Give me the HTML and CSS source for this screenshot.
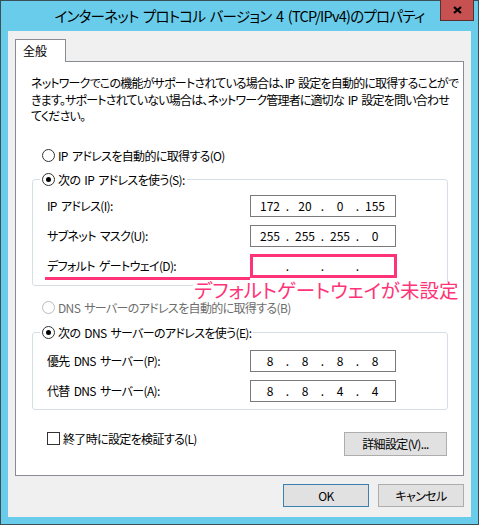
FILE: index.html
```html
<!DOCTYPE html>
<html lang="ja">
<head>
<meta charset="utf-8">
<title>IPv4 Properties</title>
<link rel="stylesheet" href="styles.css">
</head>
<body>
<div class="window">
  <div class="titlebar">
    <div class="title">インターネット プロトコル バージョン 4 (TCP/IPv4)のプロパティ</div>
    <div class="close"><svg width="9" height="8" viewBox="0 0 9 8"><path d="M1 1L8 7M8 1L1 7" stroke="#000" stroke-width="2.2" fill="none"/></svg></div>
  </div>
  <div class="client">
    <div class="tabs"><div class="tab">全般</div></div>
    <div class="panel">
      <p class="desc">ネットワークでこの機能がサポートされている場合は、IP 設定を自動的に取得することがで<br>きます。サポートされていない場合は、ネットワーク管理者に適切な IP 設定を問い合わせ<br>てください。</p>
      <div class="radio-row first"><span class="radio"></span><span>IP アドレスを自動的に取得する(O)</span></div>
      <fieldset class="group g1">
        <legend><span class="radio checked"></span><span>次の IP アドレスを使う(S):</span></legend>
        <div class="rows">
          <div class="field-row"><span>IP アドレス(I):</span>
            <div class="ipbox"><span>172</span><i>.</i><span>20</span><i>.</i><span>0</span><i>.</i><span>155</span></div></div>
          <div class="field-row"><span>サブネット マスク(U):</span>
            <div class="ipbox"><span>255</span><i>.</i><span>255</span><i>.</i><span>255</span><i>.</i><span>0</span></div></div>
          <div class="field-row gateway"><span>デフォルト ゲートウェイ(D):</span>
            <div class="ipbox"><span></span><i>.</i><span></span><i>.</i><span></span><i>.</i><span></span><b class="mark-box"></b></div>
            <b class="mark-line"></b>
            <b class="mark-text">デフォルトゲートウェイが未設定</b>
          </div>
        </div>
      </fieldset>
      <div class="radio-row disabled"><span class="radio"></span><span>DNS サーバーのアドレスを自動的に取得する(B)</span></div>
      <fieldset class="group g2">
        <legend><span class="radio checked"></span><span>次の DNS サーバーのアドレスを使う(E):</span></legend>
        <div class="rows">
          <div class="field-row"><span>優先 DNS サーバー(P):</span>
            <div class="ipbox"><span>8</span><i>.</i><span>8</span><i>.</i><span>8</span><i>.</i><span>8</span></div></div>
          <div class="field-row"><span>代替 DNS サーバー(A):</span>
            <div class="ipbox"><span>8</span><i>.</i><span>8</span><i>.</i><span>4</span><i>.</i><span>4</span></div></div>
        </div>
      </fieldset>
      <div class="bottom-row">
        <div class="check-row"><span class="checkbox"></span><span>終了時に設定を検証する(L)</span></div>
        <div class="btn details">詳細設定(V)...</div>
      </div>
    </div>
    <div class="footer">
      <div class="btn default">OK</div>
      <div class="btn">キャンセル</div>
    </div>
  </div>
</div>
</body>
</html>
```
FILE: styles.css
```css
html, body {
  margin: 0;
  padding: 0;
  background: #fff;
}
body {
  font-family: "Noto Sans CJK JP", sans-serif;
  font-size: 12px;
  font-feature-settings: "palt";
  letter-spacing: -0.65px;
  word-spacing: 2px;
  color: #000;
}
.window {
  width: 479px;
  height: 525px;
  box-sizing: border-box;
  border: 1px solid #3b4f57;
  background: #68ccea;
  display: flex;
  flex-direction: column;
}
.titlebar {
  height: 30px;
  flex: none;
  display: grid;
  grid-template-columns: 1fr auto 1fr;
  align-items: center;
}
.title {
  grid-column: 2;
  font-size: 14.5px;
  letter-spacing: -0.75px;
  word-spacing: 2px;
  line-height: 18px;
  white-space: nowrap;
}
.close {
  grid-column: 3;
  justify-self: end;
  align-self: start;
  margin-top: -1px;
  margin-right: 4px;
  width: 34px;
  height: 21px;
  box-sizing: border-box;
  background: #c75050;
  border: 1px solid #5b2f2f;
  border-top: none;
  display: flex;
  align-items: center;
  justify-content: center;
}
.client {
  flex: 1;
  margin: 0 7px 7px;
  background: #f0f0f0;
  padding: 8px 7px 10px;
  display: flex;
  flex-direction: column;
}
.tabs {
  height: 22px;
  display: flex;
  flex: none;
}
.tab {
  position: relative;
  z-index: 1;
  box-sizing: border-box;
  width: 51px;
  height: 23px;
  border: 1px solid #898c95;
  border-bottom: none;
  background: #fff;
  padding-left: 7px;
  line-height: 21px;
  letter-spacing: 0;
}
.panel {
  flex: 1;
  border: 1px solid #898c95;
  background: #fff;
  padding: 0 15px 17px;
  display: flex;
  flex-direction: column;
}
.desc {
  margin: 0;
  padding-top: 13px;
  line-height: 16.5px;
  letter-spacing: -0.8px;
  white-space: nowrap;
}
.radio-row {
  display: flex;
  align-items: center;
  gap: 3px;
  height: 16px;
  padding-left: 11px;
}
.radio-row.first { margin-top: 23px; }
.radio-row.disabled { margin-top: 14px; color: #6d6d6d; }
.radio {
  position: relative;
  width: 13px;
  height: 13px;
  box-sizing: border-box;
  border: 1px solid #333;
  border-radius: 50%;
  background: #fff;
  flex: none;
}
.disabled .radio { border-color: #bcbcbc; }
.radio.checked::after {
  content: "";
  position: absolute;
  left: 3px;
  top: 3px;
  width: 5px;
  height: 5px;
  border-radius: 50%;
  background: #000;
}
.group {
  margin: 8px 0 0 1px;
  border: 1px solid #d5dfe5;
  border-radius: 3px;
  padding: 7px 51px 8px 14px;
  min-width: 0;
}
.g2 { margin-top: 9px; padding-top: 9px; padding-bottom: 7px; }
.group legend {
  display: flex;
  align-items: center;
  gap: 3px;
  height: 16px;
  padding: 0 2px;
  margin-left: -7px;
}
.rows {
  display: flex;
  flex-direction: column;
  gap: 8px;
}
.field-row {
  display: grid;
  grid-template-columns: 1fr 146px;
  align-items: center;
  height: 22px;
}
.ipbox {
  position: relative;
  box-sizing: border-box;
  height: 22px;
  border: 1px solid #7a7a7a;
  padding-left: 4px;
  display: grid;
  grid-template-columns: 30px 5px 30px 5px 30px 5px 30px;
  align-items: center;
  text-align: center;
  line-height: 20px;
  letter-spacing: 0;
}
.ipbox i { font-style: normal; }
.gateway { position: relative; }
.mark-box {
  position: absolute;
  left: -1px;
  top: -2px;
  right: -2px;
  bottom: -2px;
  border: 3px solid #ff3377;
}
.mark-line {
  position: absolute;
  left: -2px;
  width: 205px;
  top: 22px;
  height: 3px;
  background: #ff3377;
}
.mark-text {
  position: absolute;
  left: 146px;
  top: 27px;
  font-weight: normal;
  font-size: 19.5px;
  line-height: 16px;
  letter-spacing: 0;
  color: #ff3377;
  background: #fff;
  white-space: nowrap;
  padding: 0 1px;
}
.bottom-row {
  display: flex;
  justify-content: space-between;
  align-items: flex-start;
  margin-top: 22px;
  padding: 0 1px 0 16px;
}
.check-row {
  display: flex;
  align-items: center;
  gap: 3px;
  height: 13px;
}
.checkbox {
  width: 13px;
  height: 13px;
  box-sizing: border-box;
  border: 1px solid #333;
  background: #fff;
}
.btn {
  box-sizing: border-box;
  width: 86px;
  height: 23px;
  border: 1px solid #adadad;
  background: #e1e1e1;
  display: flex;
  align-items: center;
  justify-content: center;
}
.btn.details {
  width: 103px;
  height: 24px;
}
.btn.default { border-color: #3c7fb1; }
.footer {
  display: flex;
  justify-content: flex-end;
  gap: 9px;
  margin-top: 8px;
  flex: none;
}
```
